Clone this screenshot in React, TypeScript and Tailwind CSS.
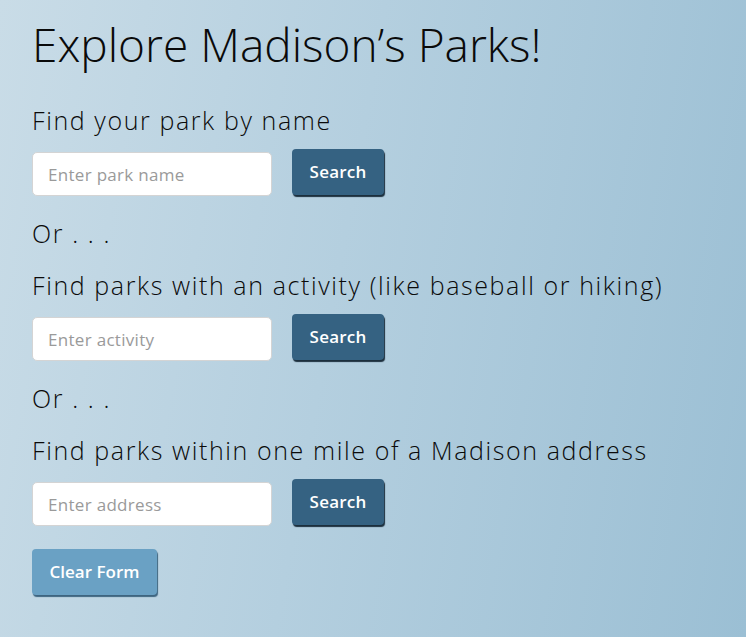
import React from "react";

function Row({ placeholder }: { placeholder: string }) {
  return (
    <div className="flex items-start">
      <input
        placeholder={placeholder}
        className="mt-[3px] box-border h-[44px] w-[240px] rounded-[5px] border border-[#d4d4d4] bg-white px-[15px] text-[17px] tracking-[0.3px] text-[#555] placeholder:text-[#9a9a9a] outline-none"
      />
      <button className="ml-[20px] h-[46px] w-[92px] rounded-[4px] bg-[#356282] text-[17px] font-semibold tracking-[0.2px] text-white shadow-[1px_2px_1px_#1c2f3d]">
        Search
      </button>
    </div>
  );
}

const label = "text-[25px] font-light leading-[30px] tracking-[1.6px]";

export default function App() {
  return (
    <div
      className="h-[637px] w-[746px] overflow-hidden bg-[linear-gradient(100deg,#c9dce7_0%,#b4cfdf_45%,#9bbfd4_100%)] pl-[32px] text-[#0a0a0a]"
      style={{ fontFamily: "'Open Sans', 'Noto Sans', sans-serif" }}
    >
      <h1 className="pt-[16px] text-[46px] font-light leading-[56px]">
        Explore Madison’s Parks!
      </h1>
      <div className={`mt-[33px] ${label}`}>Find your park by name</div>
      <div className="mt-[14px]"><Row placeholder="Enter park name" /></div>
      <div className={`mt-[22px] ${label}`}>Or . . .</div>
      <div className={`mt-[22px] ${label}`}>Find parks with an activity (like baseball or hiking)</div>
      <div className="mt-[14px]"><Row placeholder="Enter activity" /></div>
      <div className={`mt-[22px] ${label}`}>Or . . .</div>
      <div className={`mt-[22px] ${label}`}>Find parks within one mile of a Madison address</div>
      <div className="mt-[14px]"><Row placeholder="Enter address" /></div>
      <button className="mt-[23px] h-[46px] w-[125px] rounded-[4px] bg-[#6aa1c4] text-[17px] font-semibold text-white shadow-[1px_2px_1px_#3e6580]">
        Clear Form
      </button>
    </div>
  );
}
